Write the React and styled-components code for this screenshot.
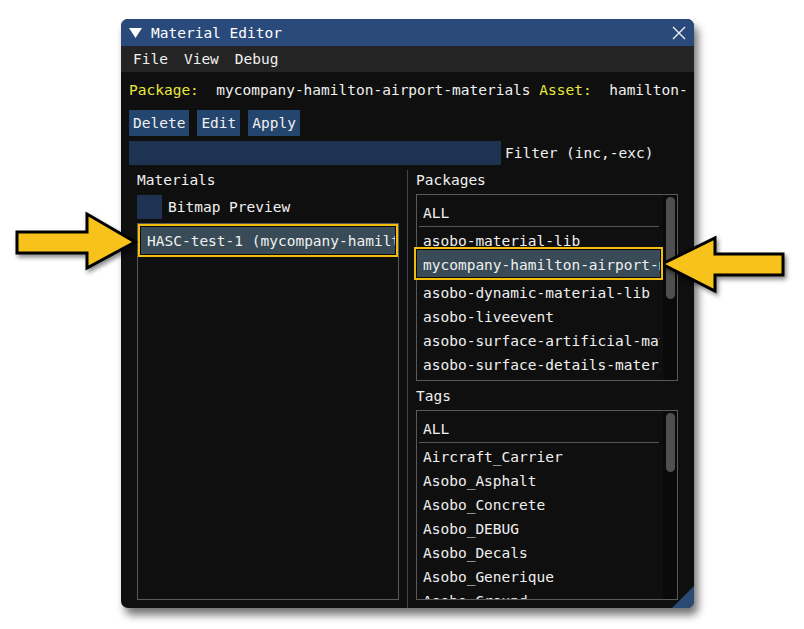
import styled, { createGlobalStyle } from "styled-components"

const GlobalStyle = createGlobalStyle`
    html, body {
        margin: 0;
        background: #ffffff;
    }
    body {
        font-family: "DejaVu Sans Mono", "Liberation Mono", monospace;
        font-size: 14.5px;
    }
`

const Pagina = styled.div`
    position: relative;
    width: 804px;
    height: 629px;
    padding: 19px 0 0 121px;
    box-sizing: border-box;
`

const Janela = styled.div`
    position: relative;
    width: 573px;
    height: 589px;
    background: #0f0f0f;
    border-radius: 7px;
    box-shadow: 4px 7px 9px rgba(0, 0, 0, 0.55);
    display: flex;
    flex-direction: column;
    overflow: hidden;
    color: #f0f0f0;
`

const BarraTitulo = styled.div`
    height: 27px;
    background: #294a7a;
    display: flex;
    align-items: center;
    padding: 0 8px 0 8px;
    gap: 9px;
`

const Titulo = styled.span`
    flex-grow: 1;
    color: #ffffff;
`

const BarraMenu = styled.div`
    height: 26px;
    background: #242424;
    display: flex;
    align-items: center;
    gap: 16px;
    padding-left: 12px;
`

const Corpo = styled.div`
    flex: 1;
    display: flex;
    flex-direction: column;
    padding: 0 8px;
    min-height: 0;
`

const LinhaInfo = styled.div`
    height: 36px;
    display: flex;
    align-items: center;
    white-space: pre;
    overflow: hidden;
`

const Rotulo = styled.span`
    color: #e8e83a;
`

const LinhaBotoes = styled.div`
    display: flex;
    gap: 8px;
    margin-top: 2px;
`

const Botao = styled.button`
    height: 26px;
    padding: 0 4px;
    border: none;
    background: #24456d;
    color: #f0f0f0;
    font: inherit;
`

const LinhaFiltro = styled.div`
    display: flex;
    align-items: center;
    gap: 4px;
    margin-top: 5px;
`

const CampoFiltro = styled.div`
    width: 372px;
    height: 24px;
    background: #1d3351;
`

const Colunas = styled.div`
    flex: 1;
    display: flex;
    margin-top: 5px;
    min-height: 0;
`

const Coluna = styled.div`
    display: flex;
    flex-direction: column;
    box-sizing: border-box;
    padding: 0 8px 8px;
    width: ${props => props.$largura}px;
    border-right: ${props => props.$divisor ? "1px solid #454545" : "none"};
`

const Secao = styled.div`
    height: 20px;
    line-height: 20px;
    margin-top: ${props => props.$topo || 0}px;
`

const LinhaCheck = styled.div`
    display: flex;
    align-items: center;
    gap: 6px;
    margin-top: 5px;
`

const Caixa = styled.div`
    width: 25px;
    height: 24px;
    background: #1d3351;
`

const Lista = styled.div`
    margin-top: 4px;
    border: 1px solid #5a5a5a;
    display: flex;
    flex: ${props => props.$altura ? "none" : 1};
    height: ${props => props.$altura ? props.$altura + "px" : "auto"};
    box-sizing: border-box;
    overflow: ${props => props.$cortar ? "hidden" : "visible"};
`

const Itens = styled.div`
    flex: 1;
    padding-top: ${props => props.$topo ?? 6}px;
    min-width: 0;
`

const Item = styled.div`
    height: 24px;
    line-height: 24px;
    padding-left: 6px;
    margin-right: 3px;
    white-space: nowrap;
    overflow: hidden;
`

const ItemSelecionado = styled.div`
    height: ${props => props.$alto}px;
    line-height: 24px;
    padding: ${props => props.$folga}px 0 0 6px;
    margin: ${props => props.$margem};
    box-sizing: border-box;
    background: #384b56;
    box-shadow: 0 0 0 1px #0a0a0a, 0 0 0 3px #f2bd0c;
    white-space: nowrap;
    overflow: hidden;
    position: relative;
    z-index: 1;
`

const Separador = styled.div`
    height: 1px;
    background: #555;
    margin: 1px 4px 2px 2px;
`

const Trilho = styled.div`
    width: 14px;
    box-sizing: border-box;
    padding: 2px 2px 2px 3px;
    background: #0a0a0a;
`

const Polegar = styled.div`
    height: ${props => props.$altura}px;
    border-radius: 5px;
    background: #4f4f4f;
`

const Alca = styled.div`
    position: absolute;
    right: 0;
    bottom: 0;
    width: 22px;
    height: 22px;
    background: #2a4a74;
    clip-path: polygon(100% 0, 100% 100%, 0 100%);
`

const Seta = styled.svg`
    position: absolute;
    left: ${props => props.$x}px;
    top: ${props => props.$y}px;
    filter: drop-shadow(2px 3px 2px rgba(0, 0, 0, 0.45));
    overflow: visible;
`

const pacotes = [
    "asobo-dynamic-material-lib",
    "asobo-liveevent",
    "asobo-surface-artificial-material",
    "asobo-surface-details-material",
]

const tags = [
    "Aircraft_Carrier",
    "Asobo_Asphalt",
    "Asobo_Concrete",
    "Asobo_DEBUG",
    "Asobo_Decals",
    "Asobo_Generique",
    "Asobo_Ground",
]

const App = () => {
    return (
        <>
            <GlobalStyle />
            <Pagina>
                <Janela>
                    <BarraTitulo>
                        <svg width="13" height="10" viewBox="0 0 13 10">
                            <polygon points="0,0 13,0 6.5,10" fill="#ffffff" />
                        </svg>
                        <Titulo>Material Editor</Titulo>
                        <svg width="14" height="14" viewBox="0 0 14 14">
                            <path d="M1 1 L13 13 M13 1 L1 13" stroke="#f0f0f0" strokeWidth="1.4" />
                        </svg>
                    </BarraTitulo>
                    <BarraMenu>
                        <span>File</span>
                        <span>View</span>
                        <span>Debug</span>
                    </BarraMenu>
                    <Corpo>
                        <LinhaInfo>
                            <Rotulo>Package:  </Rotulo>
                            <span>mycompany-hamilton-airport-materials </span>
                            <Rotulo>Asset:  </Rotulo>
                            <span>hamilton-airport-materials</span>
                        </LinhaInfo>
                        <LinhaBotoes>
                            <Botao>Delete</Botao>
                            <Botao>Edit</Botao>
                            <Botao>Apply</Botao>
                        </LinhaBotoes>
                        <LinhaFiltro>
                            <CampoFiltro />
                            <span>Filter (inc,-exc)</span>
                        </LinhaFiltro>
                        <Colunas>
                            <Coluna $largura={279} $divisor>
                                <Secao>Materials</Secao>
                                <LinhaCheck>
                                    <Caixa />
                                    <span>Bitmap Preview</span>
                                </LinhaCheck>
                                <Lista>
                                    <Itens $topo={0}>
                                        <ItemSelecionado $alto={27} $folga={2} $margem="3px 3px 0 3px">
                                            HASC-test-1 (mycompany-hamilton-airport-materials)
                                        </ItemSelecionado>
                                    </Itens>
                                </Lista>
                            </Coluna>
                            <Coluna $largura={278}>
                                <Secao>Packages</Secao>
                                <Lista $altura={187}>
                                    <Itens>
                                        <Item>ALL</Item>
                                        <Separador />
                                        <Item>asobo-material-lib</Item>
                                        <ItemSelecionado $alto={27} $folga={3} $margem="-3px 3px 4px 0">
                                            mycompany-hamilton-airport-materials
                                        </ItemSelecionado>
                                        {pacotes.map(p => <Item key={p}>{p}</Item>)}
                                    </Itens>
                                    <Trilho>
                                        <Polegar $altura={102} />
                                    </Trilho>
                                </Lista>
                                <Secao $topo={5}>Tags</Secao>
                                <Lista $cortar>
                                    <Itens>
                                        <Item>ALL</Item>
                                        <Separador />
                                        {tags.map(t => <Item key={t}>{t}</Item>)}
                                    </Itens>
                                    <Trilho>
                                        <Polegar $altura={59} />
                                    </Trilho>
                                </Lista>
                            </Coluna>
                        </Colunas>
                    </Corpo>
                    <Alca />
                </Janela>
                <Seta $x={8} $y={206} width="136" height="72" viewBox="0 0 136 72">
                    <polygon
                        points="9,26 79,26 79,8 127,36 79,62 79,47 9,47"
                        fill="#f7c21a"
                        stroke="#000"
                        strokeWidth="3"
                        strokeLinejoin="miter"
                    />
                </Seta>
                <Seta $x={655} $y={230} width="140" height="70" viewBox="0 0 140 70">
                    <polygon
                        points="7,34 60,8 60,24 128,24 128,45 60,45 60,61"
                        fill="#f7c21a"
                        stroke="#000"
                        strokeWidth="3"
                        strokeLinejoin="miter"
                    />
                </Seta>
            </Pagina>
        </>
    )
}

export default App
